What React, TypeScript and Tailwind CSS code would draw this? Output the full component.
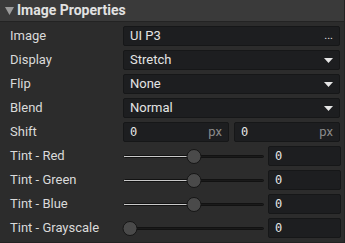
import React from 'react';

const font = { fontFamily: 'Roboto, "Noto Sans", sans-serif' };

const Caret = () => (
  <svg width="9" height="5" viewBox="0 0 9 5" className="shrink-0">
    <path d="M0 0 H9 L4.5 5 Z" fill="#e6e6e6" />
  </svg>
);

const Box: React.FC<{ children?: React.ReactNode; className?: string }> = ({ children, className = '' }) => (
  <div className={`flex h-5 items-center rounded-[2px] border border-[#161718] bg-[#1d1e20] px-[6px] ${className}`}>
    {children}
  </div>
);

const Row: React.FC<{ label: string; children: React.ReactNode }> = ({ label, children }) => (
  <div className="flex h-6 items-center pl-[10px] pr-[4px]">
    <div className="w-[113px] shrink-0 text-[13px] text-[#dadada]">{label}</div>
    <div className="flex flex-1 items-center">{children}</div>
  </div>
);

const Slider: React.FC<{ pct: number }> = ({ pct }) => (
  <div className="flex flex-1 items-center gap-[4px]">
    <div className="relative h-[15px] w-[141px]">
      <div className="absolute left-0 right-0 top-[6px] h-[3px] rounded-full border border-[#121212] bg-[#1a1a1a]" />
      <div
        className="absolute left-0 top-[6px] h-[3px] rounded-l-full border border-[#121212] bg-[#c9c9c9]"
        style={{ width: `${pct}%` }}
      />
      <div
        className="absolute top-0 h-[15px] w-[15px] -translate-x-1/2 rounded-full border border-[#161616] bg-[#4a4a4a]"
        style={{ left: `${pct}%` }}
      />
    </div>
    <Box className="w-[73px] font-['DejaVu_Sans_Mono',monospace] text-[12px] text-[#e4e4e4]">0</Box>
  </div>
);

export default function App() {
  return (
    <div style={font} className="h-[243px] w-[345px] overflow-hidden border-b border-r border-[#222] bg-[#2c2c2c]">
      <div className="flex h-[22px] items-center gap-[3px] border-b border-[#232323] bg-[#3a3a3a] pl-[5px]">
        <svg width="9" height="8" viewBox="0 0 9 8">
          <path d="M0 0 H9 L4.5 8 Z" fill="#9b9b9b" />
        </svg>
        <span className="text-[14px] font-bold text-[#e2e2e2]">Image Properties</span>
      </div>
      <div className="pt-[2px]">
        <Row label="Image">
          <Box className="flex-1 justify-between text-[13px] text-[#e4e4e4]">
            <span>UI P3</span>
            <span className="pb-[2px] text-[11px] leading-none">...</span>
          </Box>
        </Row>
        <Row label="Display">
          <Box className="flex-1 justify-between text-[13px] text-[#e4e4e4]">
            <span>Stretch</span>
            <Caret />
          </Box>
        </Row>
        <Row label="Flip">
          <Box className="flex-1 justify-between text-[13px] text-[#e4e4e4]">
            <span>None</span>
            <Caret />
          </Box>
        </Row>
        <Row label="Blend">
          <Box className="flex-1 justify-between text-[13px] text-[#e4e4e4]">
            <span>Normal</span>
            <Caret />
          </Box>
        </Row>
        <Row label="Shift">
          <div className="flex flex-1 gap-[5px]">
            <Box className="flex-1 justify-between">
              <span className="font-['DejaVu_Sans_Mono',monospace] text-[12px] text-[#e4e4e4]">0</span>
              <span className="text-[13px] text-[#8a8a8a]">px</span>
            </Box>
            <Box className="flex-1 justify-between">
              <span className="font-['DejaVu_Sans_Mono',monospace] text-[12px] text-[#e4e4e4]">0</span>
              <span className="text-[13px] text-[#8a8a8a]">px</span>
            </Box>
          </div>
        </Row>
        <Row label="Tint - Red">
          <Slider pct={50} />
        </Row>
        <Row label="Tint - Green">
          <Slider pct={50} />
        </Row>
        <Row label="Tint - Blue">
          <Slider pct={50} />
        </Row>
        <Row label="Tint - Grayscale">
          <Slider pct={5} />
        </Row>
      </div>
    </div>
  );
}
